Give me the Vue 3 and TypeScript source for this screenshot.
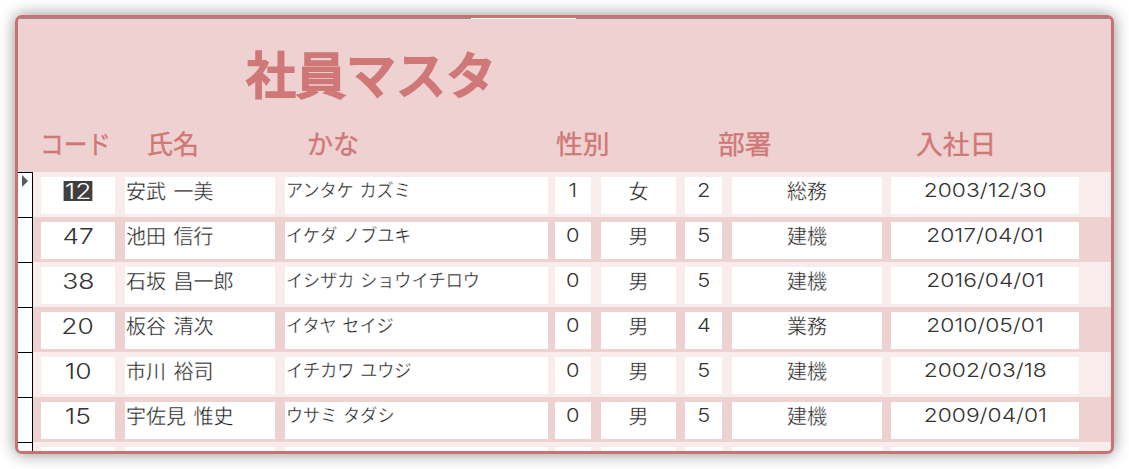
<template>
  <div class="form-frame">
    <div class="top-line"><span class="top-gap"></span></div>

    <header class="form-header">
      <h1>社員マスタ</h1>
      <div class="headings">
        <span
          v-for="h in headings"
          :key="h.key"
          :class="['heading', h.key]"
        ><span class="heading-text">{{ h.label }}</span></span>
      </div>
    </header>

    <div v-for="(row, i) in rows" :key="i" class="record">
      <div class="selector">
        <svg v-if="i === 0" width="6" height="12" viewBox="0 0 6 12">
          <path d="M0 0L6 6L0 12Z" fill="#555b5b" />
        </svg>
      </div>
      <div class="fields">
        <div class="field code">
          <span :class="['text', { selected: i === 0 }]">{{ row.code }}</span>
        </div>
        <div class="field name"><span class="text">{{ row.name }}</span></div>
        <div class="field kana"><span class="text">{{ row.kana }}</span></div>
        <div class="field gender-no digit"><span class="text">{{ row.genderNo }}</span></div>
        <div class="field gender"><span class="text">{{ row.gender }}</span></div>
        <div class="field dept-no digit"><span class="text">{{ row.deptNo }}</span></div>
        <div class="field dept"><span class="text">{{ row.dept }}</span></div>
        <div class="field joined"><span class="text">{{ row.joined }}</span></div>
      </div>
    </div>
  </div>
</template>

<script setup lang="ts">
import { ref } from 'vue';

interface Employee {
  code: string;
  name: string;
  kana: string;
  genderNo: string;
  gender: string;
  deptNo: string;
  dept: string;
  joined: string;
}

// 見出し
const headings = [
  { key: 'h-code', label: 'コード' },
  { key: 'h-name', label: '氏名' },
  { key: 'h-kana', label: 'かな' },
  { key: 'h-gender', label: '性別' },
  { key: 'h-dept', label: '部署' },
  { key: 'h-joined', label: '入社日' },
];

// 社員データ (最後の行は枠の下に隠れる)
const rows = ref<Employee[]>([
  { code: '12', name: '安武 一美', kana: 'アンタケ カズミ', genderNo: '1', gender: '女', deptNo: '2', dept: '総務', joined: '2003/12/30' },
  { code: '47', name: '池田 信行', kana: 'イケダ ノブユキ', genderNo: '0', gender: '男', deptNo: '5', dept: '建機', joined: '2017/04/01' },
  { code: '38', name: '石坂 昌一郎', kana: 'イシザカ ショウイチロウ', genderNo: '0', gender: '男', deptNo: '5', dept: '建機', joined: '2016/04/01' },
  { code: '20', name: '板谷 清次', kana: 'イタヤ セイジ', genderNo: '0', gender: '男', deptNo: '4', dept: '業務', joined: '2010/05/01' },
  { code: '10', name: '市川 裕司', kana: 'イチカワ ユウジ', genderNo: '0', gender: '男', deptNo: '5', dept: '建機', joined: '2002/03/18' },
  { code: '15', name: '宇佐見 惟史', kana: 'ウサミ タダシ', genderNo: '0', gender: '男', deptNo: '5', dept: '建機', joined: '2009/04/01' },
  { code: '', name: '', kana: '', genderNo: '', gender: '', deptNo: '', dept: '', joined: '' },
]);
</script>

<style>
body {
  background: #fff;
}
</style>

<style scoped>
.form-frame {
  box-sizing: border-box;
  width: 1099px;
  height: 439px;
  margin: 15px;
  border: 3px solid #cb7171;
  border-radius: 7px;
  background: #eed2d1;
  box-shadow: 0 0 16px rgba(0, 0, 0, 0.45);
  overflow: hidden;
  font-family: 'Noto Sans CJK JP', sans-serif;
  color: #404040;
}

.top-line {
  height: 1px;
  background: #8d8f98;
}

.top-gap {
  display: block;
  width: 105px;
  height: 1px;
  margin-left: 453px;
  background: #fff;
}

/* ヘッダー */
.form-header {
  height: 153px;
  color: #d07878;
}

h1 {
  height: 105px;
  margin: 0;
  padding-left: 228px;
  font-size: 50px;
  font-weight: 500;
  line-height: 107px;
  -webkit-text-stroke: 2px #d07878;
  stroke-linejoin: round;
}

.headings {
  display: flex;
  padding-left: 22px;
  font-size: 26px;
  line-height: 38px;
  white-space: nowrap;
}

.heading-text {
  display: inline-block;
  transform-origin: left;
  -webkit-text-stroke: 0.4px #d07878;
}

.h-code { width: 107px; }
.h-name { width: 160px; }
.h-kana { width: 249px; }
.h-gender { width: 162px; }
.h-dept { width: 198px; }

.h-code .heading-text {
  transform: scaleX(0.91);
}

.h-gender .heading-text,
.h-dept .heading-text,
.h-joined .heading-text {
  transform: scaleX(1.03);
}

/* レコード */
.record {
  display: flex;
  height: 45px;
  background: #eed2d1;
}

.record:nth-child(odd) {
  background: #f9ecec;
}

.selector {
  box-sizing: border-box;
  width: 15px;
  border-top: 1px solid #000;
  border-right: 1px solid #000;
  background: #fff;
}

.selector svg {
  display: block;
  margin: 2px 0 0 4px;
}

.fields {
  display: flex;
  padding: 5px 0 3px 8px;
}

.field {
  box-sizing: border-box;
  height: 37px;
  margin-right: 10px;
  background: #fff;
  font-size: 20px;
  line-height: 27px;
  text-align: center;
  white-space: nowrap;
}

.code { width: 74px; }
.name { width: 150px; }
.kana { width: 263px; margin-right: 7px; }
.gender-no { width: 36px; }
.gender { width: 75px; margin-right: 9px; }
.dept-no { width: 37px; }
.dept { width: 150px; margin-right: 9px; }
.joined { width: 188px; margin-right: 0; }

.name,
.kana {
  padding-left: 1px;
  text-align: left;
}

/* 白い縁取りで字を細く見せる */
.text {
  display: inline-block;
  color: #1c1c1c;
  -webkit-text-stroke: 0.35px #fff;
}

.name .text {
  word-spacing: 3px;
}

.kana .text {
  font-size: 18px;
  line-height: 24px;
  word-spacing: 2px;
  transform: scaleX(0.95);
  transform-origin: left;
}

.kana {
  line-height: 24px;
}

.code .text,
.digit .text,
.joined .text {
  color: #333;
  font-family: Inter, sans-serif;
  font-weight: 300;
  -webkit-text-stroke: 0;
}

.code .text {
  margin-top: 4px;
  font-size: 22px;
  line-height: 20px;
  transform: scaleX(1.2);
}

.code .selected {
  padding: 0 1px;
  background: #404040;
  color: #fff;
}

.digit,
.joined {
  font-size: 19px;
  line-height: 24px;
}

.digit .text {
  transform: scaleX(1.15);
}

.joined .text {
  transform: scaleX(1.2);
}
</style>
